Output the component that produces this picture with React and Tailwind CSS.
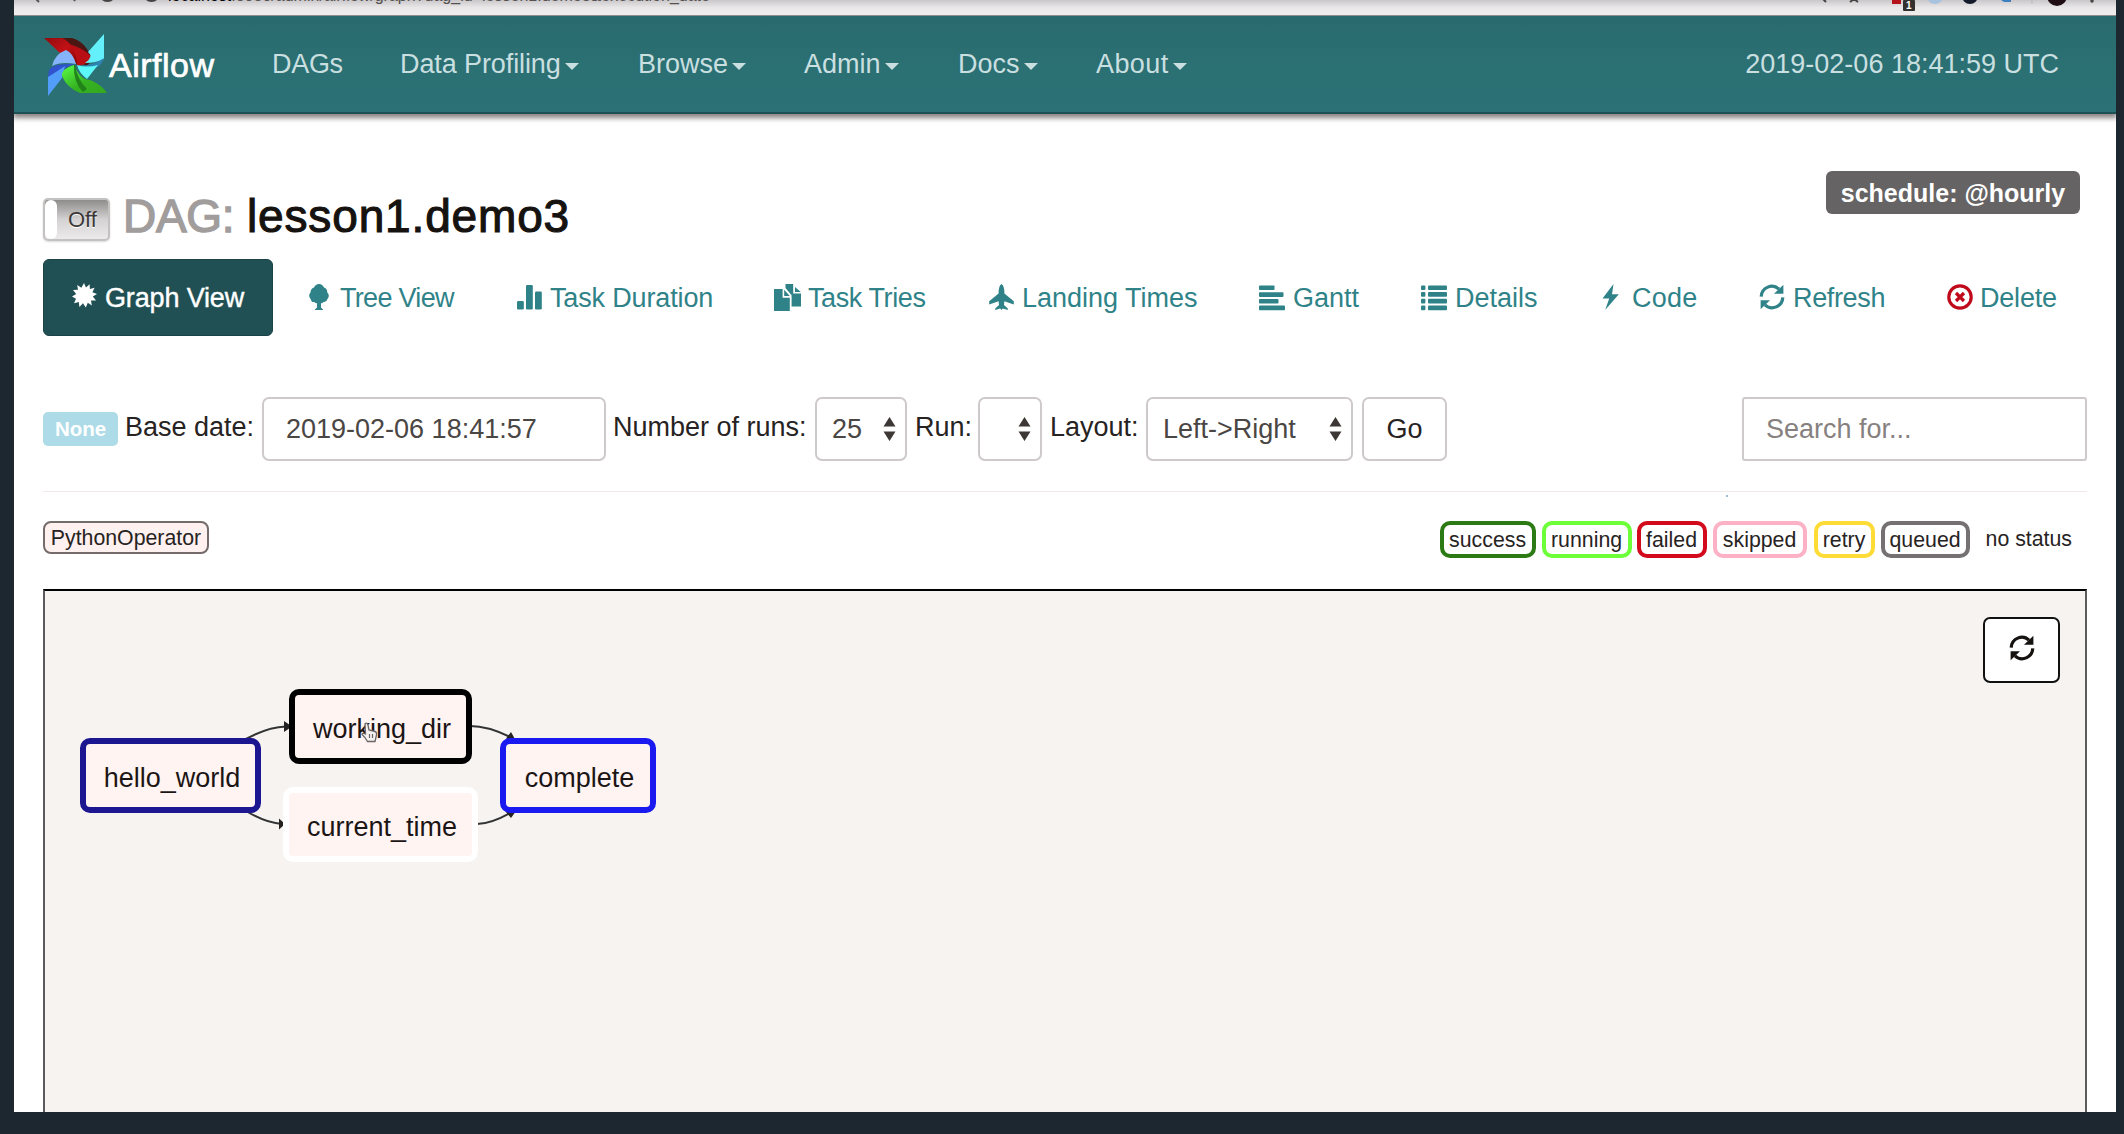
import React from "react";

function Pinwheel() {
  return (
    <svg className="mt-[3px] h-[64px] w-[66px] shrink-0" viewBox="0 0 66 64">
      <defs>
        <linearGradient id="red" x1="0" y1="0" x2="1" y2="1">
          <stop offset="0" stopColor="#8e0b0e" />
          <stop offset="0.5" stopColor="#c31116" />
          <stop offset="1" stopColor="#7c0508" />
        </linearGradient>
        <linearGradient id="green" x1="0" y1="0" x2="1" y2="1">
          <stop offset="0" stopColor="#5dff48" />
          <stop offset="0.55" stopColor="#35b321" />
          <stop offset="1" stopColor="#36a71f" />
        </linearGradient>
      </defs>
      <path d="M18 4 L28 4 Q38 7 43 15 L47 21 Q48 28 42 33 Z" fill="#4c1612" />
      <path d="M0 4 H18 Q25 6 32 20 Q35 26 34 32 L27 23 Q23 17 16 19 Z" fill="url(#red)" />
      <path d="M25 10 Q37 13 47 22 Q45 31 33 32 Q34 22 25 10 Z" fill="#b90f14" />
      <path d="M60 0 V25 Q52 29 41 29 Q50 23 44 18 Z" fill="#63f0fa" />
      <path d="M60 24 Q58 31 52 34 L33 32 Q49 32 60 24 Z" fill="#2f84b4" />
      <path d="M33 31 Q43 34 54 31 L43 45 Q35 39 33 31 Z" fill="#5cf7f8" />
      <path d="M22 16 Q29 19 32 30 Q17 27 8 32 Q11 20 22 16 Z" fill="#86b4fb" />
      <path d="M5 36 Q9 29 31 30 Q20 32 15 42 L4 44 Z" fill="#3153cd" />
      <path d="M4 43 Q12 38 21 32 L18 44 L4 62 Z" fill="#529dfa" />
      <path d="M30 31 Q17 35 18 42 Q23 54 36 59 H63 Q57 50 46 46 Q36 46 30 31 Z" fill="url(#green)" />
      <path d="M30 31 Q29 48 39 58 L43 55 Q33 45 31 31 Z" fill="#21821a" />
    </svg>
  );
}

function Glyph({ name, className }) {
  const shapes = {
    burst: (
      <path d="M12 0 L14 4.6 L17.6 1.2 L17.9 6 L22.6 4.8 L20.4 9.2 L25 11 L20.8 13.5 L24 17.4 L19 17.6 L19.8 22.5 L15.8 19.8 L13.8 24.5 L11 20.3 L7.4 24 L6.8 19 L2 20.2 L4 15.8 L0 13.5 L4.2 11 L1 7 L6 6.8 L5.2 2 L9.4 4.8 Z" />
    ),
    tree: (
      <path d="M12 0 Q15.5 0 17 3.5 Q20.6 5 20.2 8.3 Q23.4 12 20.3 15.2 Q19.5 18.5 16.5 18 Q15 19.7 14 19 V23.5 L16.5 26 H7.5 L10 23.5 V19 Q8.8 19.7 7.4 18 Q4.4 18.5 3.8 15.2 Q.6 12 3.6 8.3 Q3.4 5 7 3.5 Q8.6 0 12 0 Z" />
    ),
    bars: (
      <>
        <rect x="0" y="17" width="6.8" height="8.5" rx="1.2" />
        <rect x="9" y="1" width="6.8" height="24.5" rx="1.2" />
        <rect x="18" y="7.5" width="6.8" height="18" rx="1.2" />
      </>
    ),
    copy: (
      <>
        <path d="M0 5 H8.6 V13.8 H15.8 V27 H0 Z" />
        <path d="M10.2 5.8 L15.8 12 H10.2 Z" />
        <path d="M11.5 0 H19.2 V9.6 H27 V22.5 H17.6 V11.3 L11.5 4 Z" />
        <path d="M21 3 L26.8 8 H21 Z" />
      </>
    ),
    plane: (
      <path d="M12.5 0 Q15.6 2 15.4 9.5 L24.8 17.2 V20.5 L15.4 17.2 L15 21 L18.8 24.4 V26 L13.8 24.4 L12.5 26 L11.2 24.4 L6.2 26 V24.4 L10 21 L9.6 17.2 L.2 20.5 V17.2 L9.6 9.5 Q9.4 2 12.5 0 Z" />
    ),
    align: (
      <>
        <rect x="0" y="1.5" width="15.5" height="4.6" rx="0.8" />
        <rect x="0" y="8.3" width="24.5" height="4.6" rx="0.8" />
        <rect x="0" y="15" width="19.5" height="4.6" rx="0.8" />
        <rect x="0" y="21.6" width="26" height="4.6" rx="0.8" />
      </>
    ),
    list: (
      <>
        {[1.4, 8, 14.8, 21.5].map((y) => (
          <React.Fragment key={y}>
            <rect x="0" y={y} width="4.4" height="4.7" rx="1" />
            <rect x="7" y={y} width="19" height="4.7" rx="1" />
          </React.Fragment>
        ))}
      </>
    ),
    flash: <path d="M15.5 0 L4.5 14.5 H11.2 L7.2 26 L20.8 10.2 H14 Z" />,
    refresh: (
      <>
        <path d="M2.2 12.6 A10.6 10.8 0 0 1 20 5.2" fill="none" stroke="currentColor" strokeWidth="3.2" />
        <path d="M24.4 .8 V9.8 H15 Z" />
        <path d="M23.8 13.4 A10.6 10.8 0 0 1 6 20.8" fill="none" stroke="currentColor" strokeWidth="3.2" />
        <path d="M1.6 25.2 V16.2 H11 Z" />
      </>
    ),
    remove: (
      <>
        <circle cx="13" cy="13" r="11.2" fill="none" stroke="currentColor" strokeWidth="3.2" />
        <path d="M9 9 L17 17 M17 9 L9 17" fill="none" stroke="currentColor" strokeWidth="3.2" />
      </>
    ),
  };
  return (
    <svg className={"h-[26px] w-[26px] shrink-0 overflow-visible " + className} viewBox="0 0 26 26" fill="currentColor">
      {shapes[name]}
    </svg>
  );
}

function NavItem({ label, cell, text, caret = true }) {
  return (
    <div className={"flex shrink-0 items-center " + cell}>
      <span className={text}>{label}</span>
      {caret && (
        <svg className="mt-[4px] ml-[4px] h-[7px] w-[14px]" viewBox="0 0 14 7">
          <path d="M0 0 H14 L7 7 Z" fill="#c9dfe0" />
        </svg>
      )}
    </div>
  );
}

function Tab({ icon, label, cell, text, glyph = "mr-[8px]" }) {
  return (
    <div className={"flex h-[77px] shrink-0 items-center text-[#2f8388] " + cell}>
      <Glyph name={icon} className={"-mt-[2px] " + glyph} />
      <span className={"mt-[1px] " + text}>{label}</span>
    </div>
  );
}

function Arrows() {
  return (
    <svg className="h-[24px] w-[13px]" viewBox="0 0 13 24" fill="#3d3836">
      <path d="M6.5 0 L12.5 9.5 H.5 Z M6.5 24 L12.5 14.5 H.5 Z" />
    </svg>
  );
}

function Select({ value, box }) {
  return (
    <div className={"flex h-[64px] shrink-0 items-center justify-between rounded-[7px] border-2 border-[#cfcaca] pr-[9px] pl-[15px] text-[#4a4644] " + box}>
      <span>{value}</span>
      <Arrows />
    </div>
  );
}

function Label({ children, box }) {
  return <div className={"-mt-[3px] shrink-0 " + box}>{children}</div>;
}

function Status({ label, box }) {
  return (
    <span className={"flex h-[37px] shrink-0 items-center justify-center rounded-[10px] border-4 pt-[1px] " + box}>
      {label}
    </span>
  );
}

function Node({ label, box }) {
  return (
    <div className={"absolute flex h-[75px] items-center justify-center rounded-[10px] border-[6px] bg-[#fff4f1] pt-[5px] pl-[3px] text-[27px] text-[#1c1516] " + box}>
      {label}
    </div>
  );
}

function Edges() {
  return (
    <svg className="absolute top-0 left-0 h-[522px] w-[700px]" viewBox="45 591 700 522" fill="none" stroke="#333" strokeWidth="2">
      <path d="M246 739 Q268 727 286 726.5" />
      <path d="M246 811 Q266 823 282 824" />
      <path d="M470 726 Q489 726 512 738" />
      <path d="M477 824 Q491 824 512 812" />
      <g fill="#222" stroke="none">
        <path d="M284 721 L292 726.5 L284 732 Z" />
        <path d="M279 818.5 L285 824 L279 829.5 Z" />
        <path d="M511 732 L516 741 L506 738.5 Z" />
        <path d="M506 812 L516 811 L511 818 Z" />
      </g>
    </svg>
  );
}

function HandCursor() {
  return (
    <svg className="absolute top-[131px] left-[315px] h-[21px] w-[18px]" viewBox="0 0 18 21">
      <path
        d="M5 2 Q7 0 8 3 L9 8 L15 9.5 Q17 10 16.5 13 L15 19.5 H7.5 Q5 15 2 12.5 Q2 10.5 5.5 12 Z"
        fill="#f5f1f1"
        stroke="#6b6566"
        strokeWidth="1.3"
      />
      <path d="M9.5 12 V16 M12.5 12 V16" stroke="#6b6566" strokeWidth="1.2" />
    </svg>
  );
}

function BrowserBar() {
  return (
    <div className="relative h-[16px] overflow-hidden border-b border-[#8f8c8b] bg-linear-to-b from-[#c9c7c9] via-[#e9e7e8] to-[#efeded]">
      <div className="absolute -top-[13px] left-[154px] text-[16px] leading-[18px] tracking-[0.01px] whitespace-nowrap text-[#55514f]">
        <span className="text-black">localhost</span>:8080/admin/airflow/graph?dag_id=lesson1.demo3&amp;execution_date=
      </div>
      <svg className="absolute top-0 left-0 h-[15px] w-[2102px]" viewBox="14 0 2102 15" fill="none">
        <path d="M34 -3 L39 2 M74 1 L77 -3" stroke="#555" strokeWidth="2" />
        <path d="M102 -2 A6 5 0 0 0 113 -2 M146 -2 A6 5 0 0 0 157 -2" stroke="#444" strokeWidth="2.2" />
        <path d="M1822 -2 L1826 2 M1850 2 L1854 -1 L1858 2" stroke="#444" strokeWidth="2" />
        <rect x="1892" y="-3" width="9" height="7" fill="#b5121b" />
        <rect x="1903" y="0" width="12" height="11" rx="1" fill="#33302e" />
        <ellipse cx="1935" cy="-1" rx="7" ry="5" fill="#a9c3df" />
        <circle cx="1970" cy="-4" r="8" fill="#141c2c" />
        <path d="M2001 0 H2011 V2 H2004 Z" fill="#3b7fc0" />
        <path d="M2032 0 V4" stroke="#bbb" />
        <circle cx="2057" cy="-4" r="10" fill="#1f0d14" />
        <circle cx="2092" cy="1" r="1.7" fill="#444" />
      </svg>
      <span className="absolute top-0 left-[1892px] text-[10px] leading-[11px] font-bold text-white">1</span>
    </div>
  );
}

export default function App() {
  return (
    <div className="h-[1134px] w-[2124px] overflow-hidden bg-[#1c272f] pr-[8px] pl-[14px] font-['Liberation_Sans',Arial,sans-serif] text-[27px] leading-[32px] whitespace-nowrap text-[#272322]">
      <div className="h-[1112px] overflow-hidden bg-white">
        <BrowserBar />
        <nav className="flex h-[98px] items-center border-b-2 border-[#1e5155] bg-linear-to-b from-[#296a6d] via-[#2b7073] to-[#2b7175] pl-[30px] text-[#c9dfe0] shadow-[0_3px_5px_1px_rgba(60,50,50,0.6)]">
          <Pinwheel />
          <span className="mt-[1px] -ml-[1px] w-[163px] shrink-0 text-[34px] tracking-[0.5px] text-white [-webkit-text-stroke:0.7px_white]">Airflow</span>
          <NavItem label="DAGs" cell="w-[128px]" text="tracking-[-0.3px]" caret={false} />
          <NavItem label="Data Profiling" cell="w-[238px]" text="tracking-[-0.1px]" />
          <NavItem label="Browse" cell="w-[166px]" text="" />
          <NavItem label="Admin" cell="w-[154px]" text="" />
          <NavItem label="Docs" cell="w-[138px]" text="" />
          <NavItem label="About" cell="" text="tracking-[0.4px]" />
          <span className="mr-[57px] ml-auto">2019-02-06 18:41:59 UTC</span>
        </nav>

        <main className="px-[29px]">
          <header className="flex h-[145px] items-start justify-between">
            <div className="flex pt-[72px]">
              <div className="mt-[12px] flex h-[43px] w-[67px] overflow-hidden rounded-[5px] border-2 border-[#c4c1c1] bg-linear-to-b from-[#8f8c8c] via-[#d4d2d2] to-[#eceaea] text-[22px] shadow-[0_1px_2px_rgba(0,0,0,0.15)]">
                <div className="w-[12px] rounded-[6px] bg-white" />
                <span className="pt-[4px] pl-[11px] leading-[31px] text-[#3c3838] [text-shadow:0_1px_0_white]">Off</span>
              </div>
              <h1 className="ml-[13px] flex text-[46px] leading-[60px]">
                <span className="w-[124px] tracking-[-0.3px] text-[#a19d9c] [-webkit-text-stroke:1.4px_#a19d9c]">DAG:</span>
                <span className="tracking-[0.85px] text-[#151210] [-webkit-text-stroke:1.1px_#151210]">lesson1.demo3</span>
              </h1>
            </div>
            <div className="mt-[57px] mr-[7px] flex h-[43px] w-[254px] items-center justify-center rounded-[6px] bg-[#666364] text-[25px] font-bold text-white">
              schedule: @hourly
            </div>
          </header>

          <div className="flex">
            <div className="mr-[35px] flex h-[77px] w-[230px] shrink-0 items-center rounded-[6px] border border-[#1a4347] bg-[#205054] pl-[28px] text-white [-webkit-text-stroke:0.4px_white]">
              <Glyph name="burst" className="mr-[7px] -mt-[3px]" />
              <span className="mt-[1px] tracking-[-0.15px]">Graph View</span>
            </div>
            <Tab icon="tree" label="Tree View" cell="w-[209px]" text="tracking-[-0.7px]" glyph="-ml-[1px] mr-[7px]" />
            <Tab icon="bars" label="Task Duration" cell="w-[257px]" text="tracking-[-0.15px]" glyph="mr-[7px]" />
            <Tab icon="copy" label="Task Tries" cell="w-[215px]" text="tracking-[-0.4px]" />
            <Tab icon="plane" label="Landing Times" cell="w-[270px]" text="" glyph="mr-[7px]" />
            <Tab icon="align" label="Gantt" cell="w-[162px]" text="" />
            <Tab icon="list" label="Details" cell="w-[177px]" text="" />
            <Tab icon="flash" label="Code" cell="w-[161px]" text="tracking-[0.2px]" />
            <Tab icon="refresh" label="Refresh" cell="w-[188px]" text="tracking-[-0.35px]" />
            <Tab icon="remove" label="Delete" cell="" text="tracking-[-0.2px]" glyph="mr-[7px] text-[#c00a1c]" />
          </div>

          <form className="mt-[60px] flex h-[64px] items-center pt-px">
            <div className="mr-[7px] flex h-[34px] w-[75px] shrink-0 items-center justify-center rounded-[5px] bg-[#addbe7] text-[20.5px] font-bold text-white">None</div>
            <Label box="w-[137px]">Base date:</Label>
            <div className="mr-[7px] flex h-[64px] w-[344px] shrink-0 items-center rounded-[7px] border-2 border-[#cfcaca] pl-[22px] text-[#4a4644]">
              2019-02-06 18:41:57
            </div>
            <Label box="w-[202px]">Number of runs:</Label>
            <Select value="25" box="w-[92px] mr-[8px]" />
            <Label box="w-[63px]">Run:</Label>
            <Select value="" box="w-[64px] mr-[8px]" />
            <Label box="w-[96px]">Layout:</Label>
            <Select value="Left->Right" box="w-[207px] mr-[9px]" />
            <div className="flex h-[64px] w-[85px] shrink-0 items-center justify-center rounded-[7px] border-2 border-[#cfcaca]">Go</div>
            <div className="ml-auto flex h-[64px] w-[345px] items-center rounded-[3px] border-2 border-[#cfcaca] pl-[22px] text-[#86817f]">Search for...</div>
          </form>

          <div className="mt-[31px] h-px bg-[#f1e9e9]" />
          <div className="mt-[3px] mr-[359px] ml-auto h-[2px] w-[2px] bg-[#9dbcd8]" />

          <div className="mt-[24px] flex items-start text-[21.3px] leading-[24px]">
            <span className="flex h-[33px] w-[166px] items-center justify-center rounded-[8px] border-2 border-[#746b6b] bg-[#fff1ef]">PythonOperator</span>
            <div className="mr-[15px] ml-auto flex">
              <Status label="success" box="w-[96px] mr-[6px] border-[#2c7a14]" />
              <Status label="running" box="w-[90px] mr-[5px] border-[#6dff38]" />
              <Status label="failed" box="w-[70px] mr-[6px] border-[#d20a1b]" />
              <Status label="skipped" box="w-[94px] mr-[7px] border-[#fcb1c5]" />
              <Status label="retry" box="w-[61px] mr-[6px] border-[#ffdb35]" />
              <Status label="queued" box="w-[89px] mr-[16px] border-[#757172]" />
              <span className="pt-[6px]">no status</span>
            </div>
          </div>

          <section className="relative mt-[31px] h-[600px] border-2 border-[#5c5a5c] border-t-black bg-[#f6f3f1]">
            <Edges />
            <Node label="hello_world" box="left-[35px] top-[147px] w-[181px] border-[#1d1691]" />
            <Node label="working_dir" box="left-[244px] top-[98px] w-[183px] border-black" />
            <Node label="current_time" box="left-[238px] top-[196px] w-[195px] border-white" />
            <Node label="complete" box="left-[455px] top-[147px] w-[156px] border-[#1a1af0]" />
            <HandCursor />
            <button className="absolute top-[26px] right-[25px] flex h-[66px] w-[77px] items-center justify-center rounded-[7px] border-2 border-[#111] bg-white pb-[4px] text-[#151210]">
              <Glyph name="refresh" className="" />
            </button>
          </section>
        </main>
      </div>
    </div>
  );
}
